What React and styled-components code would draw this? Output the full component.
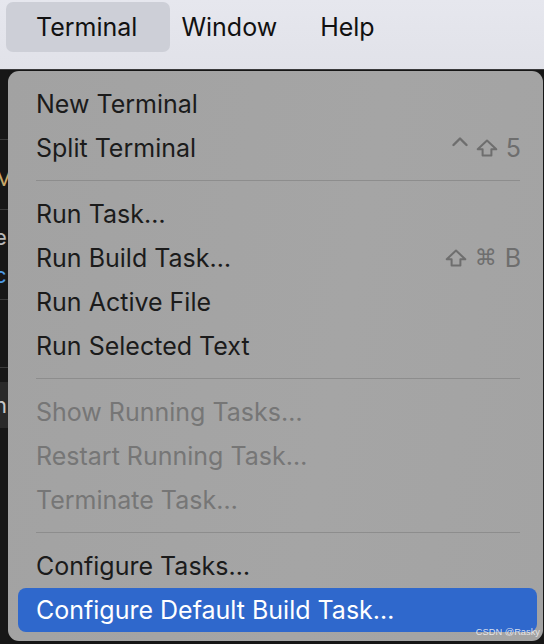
import React from 'react';
import styled, { createGlobalStyle } from 'styled-components';

const GlobalStyle = createGlobalStyle`
  html, body {
    margin: 0;
    padding: 0;
    width: 544px;
    height: 644px;
    overflow: hidden;
    background: #161616;
  }
  body {
    font-family: Inter, "Noto Sans", "Liberation Sans", sans-serif;
    -webkit-font-smoothing: antialiased;
  }
`;

const ControlIcon = () => (
  <KeyIcon width="16" height="18" viewBox="0 0 16 18" $lift>
    <path d="M1.5 9 L8 2.5 L14.5 9" fill="none" stroke="currentColor" strokeWidth="2.4" strokeLinecap="round" strokeLinejoin="round" />
  </KeyIcon>
);

const ShiftIcon = () => (
  <KeyIcon width="22" height="18" viewBox="0 0 22 18">
    <path d="M11 1.6 L20.3 10.2 H15.4 V16.6 H6.6 V10.2 H1.7 Z" fill="none" stroke="currentColor" strokeWidth="2" strokeLinejoin="round" />
  </KeyIcon>
);

// Renders one key of a shortcut: modifiers as symbols, everything else as text
const ShortcutKey = ({ name }) => {
  if (name === 'ctrl') return <ControlIcon />;
  if (name === 'shift') return <ShiftIcon />;
  if (name === 'cmd') return <KeyGlyph $symbol>⌘</KeyGlyph>;
  return <KeyGlyph>{name}</KeyGlyph>;
};

const menuItems = [
  { label: 'New Terminal' },
  { label: 'Split Terminal', shortcut: ['ctrl', 'shift', '5'] },
  { separator: true },
  { label: 'Run Task…' },
  { label: 'Run Build Task…', shortcut: ['shift', 'cmd', 'B'] },
  { label: 'Run Active File' },
  { label: 'Run Selected Text' },
  { separator: true },
  { label: 'Show Running Tasks…', disabled: true },
  { label: 'Restart Running Task…', disabled: true },
  { label: 'Terminate Task…', disabled: true },
  { separator: true },
  { label: 'Configure Tasks…' },
  { label: 'Configure Default Build Task…', active: true },
];

// Bits of the editor that peek out to the left of the menu
const editorBits = [
  { top: 68, line: true },
  { top: 96, text: 'M', color: '#c8a86a' },
  { top: 138, line: true },
  { top: 155, text: 'e', color: '#b8b8b8' },
  { top: 193, text: 'c', color: '#4d9be6' },
  { top: 228, line: true },
  { top: 296, line: true },
];

const App = () => {
  return (
    <Page>
      <GlobalStyle />
      <MenuBar>
        <BarItem $open>Terminal</BarItem>
        <BarItem>Window</BarItem>
        <BarItem>Help</BarItem>
      </MenuBar>
      <Workspace>
        <EditorStrip>
          {editorBits.map((bit, i) =>
            bit.line ? (
              <EditorLine key={i} style={{ top: bit.top }} />
            ) : (
              <EditorGlyph key={i} style={{ top: bit.top }} $color={bit.color}>
                {bit.text}
              </EditorGlyph>
            )
          )}
          <EditorBlock>
            <EditorGlyph style={{ top: 12 }} $color="#c8c8c8">h</EditorGlyph>
          </EditorBlock>
        </EditorStrip>
        <MenuPanel>
          {menuItems.map((item, i) =>
            item.separator ? (
              <Separator key={i} />
            ) : (
              <MenuRow key={i} $active={item.active} $disabled={item.disabled}>
                <span>{item.label}</span>
                {item.shortcut && (
                  <Shortcut>
                    {item.shortcut.map(k => (
                      <ShortcutKey key={k} name={k} />
                    ))}
                  </Shortcut>
                )}
              </MenuRow>
            )
          )}
          <Watermark>CSDN @Rasky</Watermark>
        </MenuPanel>
      </Workspace>
    </Page>
  );
};

const Page = styled.div`
  width: 544px;
  height: 644px;
  display: flex;
  flex-direction: column;
  background: #161616;
`;

const MenuBar = styled.div`
  height: 70px;
  flex-shrink: 0;
  display: flex;
  align-items: flex-start;
  padding: 2px 0 0 6px;
  box-sizing: border-box;
  background: linear-gradient(#e6e7ee, #e1e2e9);
  border-bottom: 1px solid #3a3a3c;
`;

const BarItem = styled.div`
  height: 50px;
  display: flex;
  align-items: center;
  padding: ${p => (p.$open ? '0 33px 0 30px' : '0 32px 0 11px')};
  border-radius: 7px;
  background: ${p => (p.$open ? '#cdcfd7' : 'transparent')};
  color: #111;
  font-size: 25px;
`;

const Workspace = styled.div`
  flex: 1;
  display: flex;
  padding-top: 1px;
  padding-bottom: 3px;
  min-height: 0;
`;

const EditorStrip = styled.div`
  width: 8px;
  flex-shrink: 0;
  position: relative;
  overflow: hidden;
  background: #171717;
`;

const EditorLine = styled.div`
  position: absolute;
  left: 0;
  width: 8px;
  height: 1px;
  background: #3a3a3a;
`;

const EditorGlyph = styled.div`
  position: absolute;
  left: -6px;
  font-size: 22px;
  line-height: 1;
  color: ${p => p.$color};
`;

const EditorBlock = styled.div`
  position: absolute;
  top: 311px;
  left: 0;
  width: 8px;
  height: 46px;
  background: #2a2a2a;
`;

const MenuPanel = styled.div`
  position: relative;
  flex: 1;
  margin-right: 1px;
  display: flex;
  flex-direction: column;
  padding: 11px 6px 0 10px;
  border-radius: 11px;
  background: linear-gradient(100deg, #a2a2a2 0%, #a5a5a5 60%, #a3a3a3 100%);
`;

const MenuRow = styled.div`
  height: 44px;
  flex-shrink: 0;
  display: flex;
  align-items: center;
  justify-content: space-between;
  padding: 0 16px 0 18px;
  border-radius: 8px;
  font-size: 25px;
  color: ${p => (p.$active ? '#ffffff' : p.$disabled ? '#767676' : '#1b1b1b')};
  background: ${p => (p.$active ? '#2f68cc' : 'transparent')};
`;

const Shortcut = styled.span`
  display: flex;
  align-items: center;
  gap: 8px;
  color: #6e6e6e;
`;

const KeyIcon = styled.svg`
  display: block;
  margin-top: ${p => (p.$lift ? '-6px' : '0')};
`;

const KeyGlyph = styled.span`
  font-size: ${p => (p.$symbol ? '22px' : '25px')};
  font-family: ${p => (p.$symbol ? '"DejaVu Sans", sans-serif' : 'Inter, sans-serif')};
  line-height: 1;
`;

const Separator = styled.div`
  height: 1px;
  flex-shrink: 0;
  margin: 10px 17px 11px 18px;
  background: #8d8d8d;
`;

const Watermark = styled.div`
  position: absolute;
  right: 3px;
  bottom: 4px;
  font-size: 9.3px;
  color: rgba(238, 238, 242, 0.9);
  font-family: "Liberation Sans", Arial, sans-serif;
`;

export default App;
